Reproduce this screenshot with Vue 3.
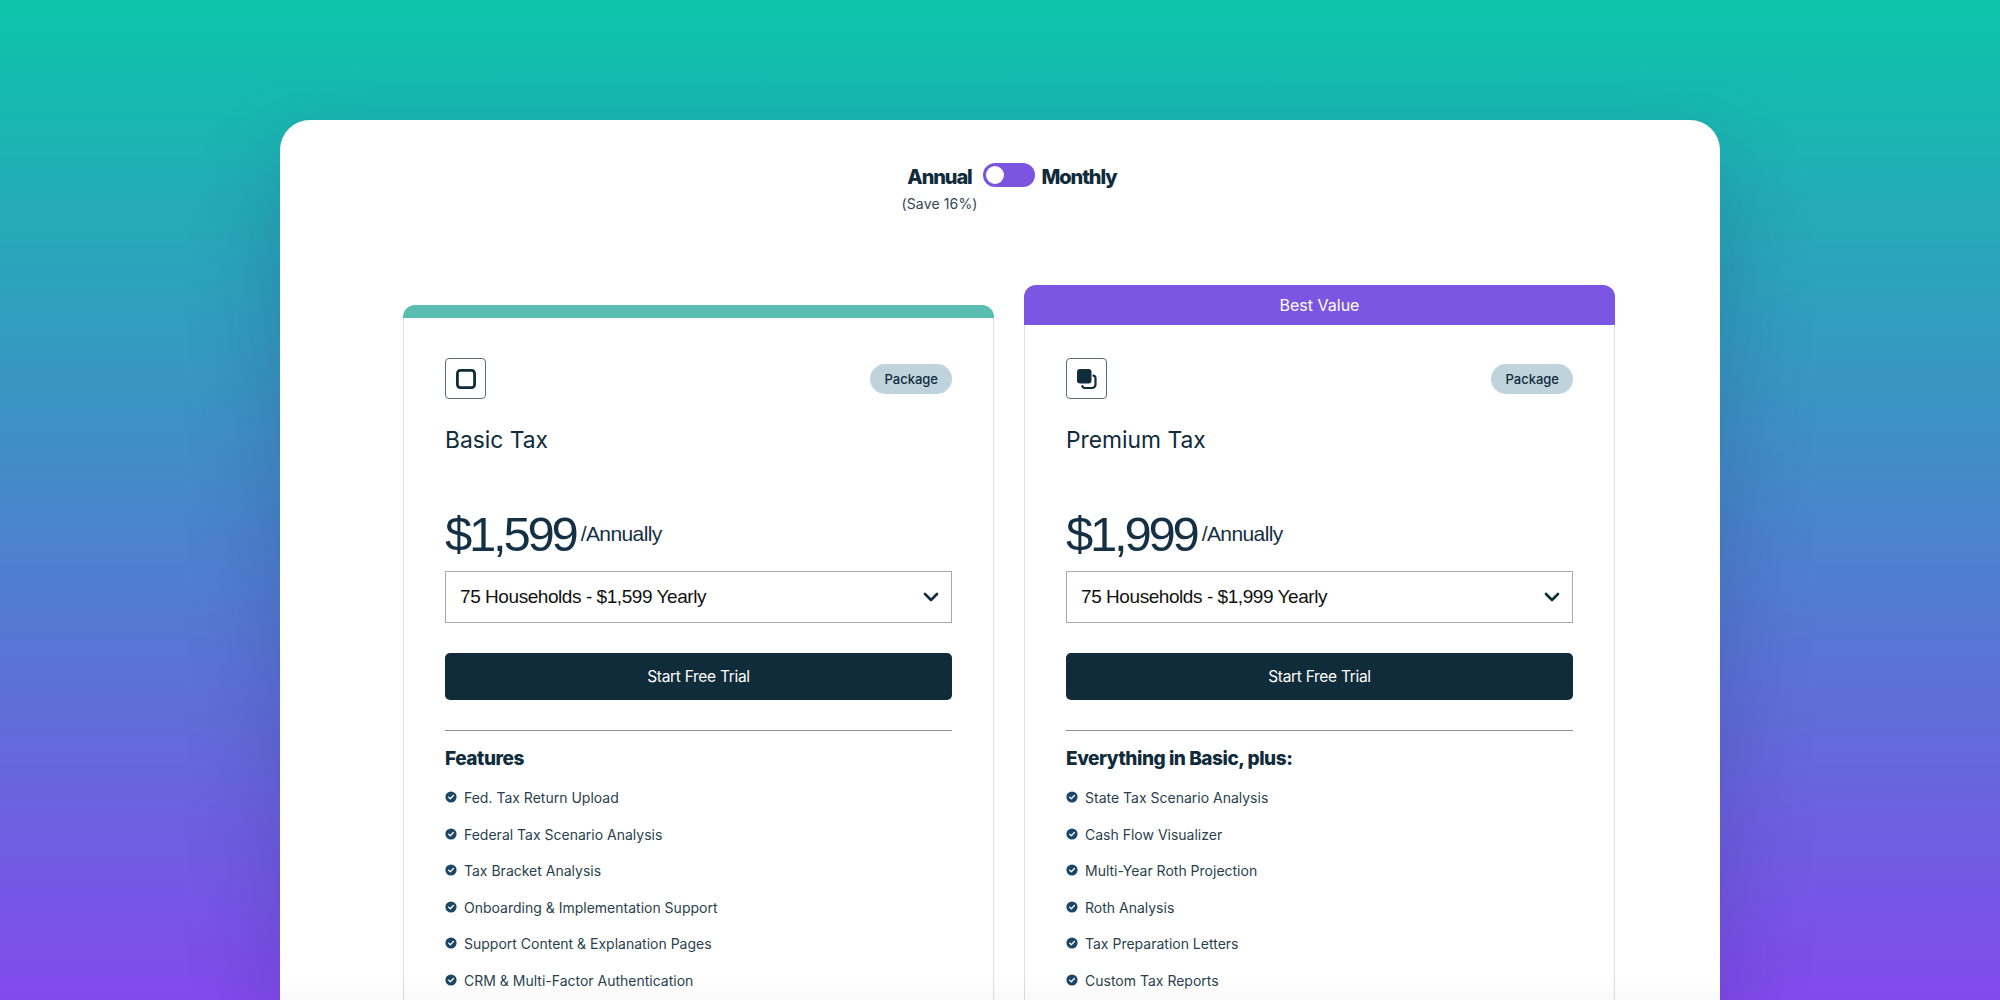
<script setup>
const plans = [
  {
    name: 'Basic Tax',
    price: '$1,599',
    heading: 'Features',
    featured: false,
    features: [
      'Fed. Tax Return Upload',
      'Federal Tax Scenario Analysis',
      'Tax Bracket Analysis',
      'Onboarding & Implementation Support',
      'Support Content & Explanation Pages',
      'CRM & Multi-Factor Authentication'
    ]
  },
  {
    name: 'Premium Tax',
    price: '$1,999',
    heading: 'Everything in Basic, plus:',
    featured: true,
    features: [
      'State Tax Scenario Analysis',
      'Cash Flow Visualizer',
      'Multi-Year Roth Projection',
      'Roth Analysis',
      'Tax Preparation Letters',
      'Custom Tax Reports'
    ]
  }
]
</script>

<template>
  <div class="page">
    <div class="panel">
      <div class="billing">
        <div class="billing-col">
          <span class="billing-label">Annual</span>
          <span class="save">(Save 16%)</span>
        </div>
        <div class="toggle"><span class="knob"></span></div>
        <span class="billing-label">Monthly</span>
      </div>

      <div class="cards">
        <div v-for="plan in plans" :key="plan.name" class="card" :class="{ featured: plan.featured }">
          <div class="card-bar">{{ plan.featured ? 'Best Value' : '' }}</div>
          <div class="card-body">
            <div class="card-top">
              <div class="icon-box">
                <svg v-if="!plan.featured" width="22" height="22" viewBox="0 0 22 22" fill="none">
                  <rect x="2.4" y="2.4" width="17.2" height="17.2" rx="3" stroke="#102b3a" stroke-width="2.8" />
                </svg>
                <svg v-else width="22" height="22" viewBox="0 0 22 22" fill="none">
                  <path d="M8.5 20h7.5a3.5 3.5 0 0 0 3.5-3.5V10a2.5 2.5 0 0 0-2-2.4" stroke="#102b3a" stroke-width="2.2" stroke-linecap="round" />
                  <path d="M8.5 20a2.6 2.6 0 0 1-2.2-2" stroke="#102b3a" stroke-width="2.2" stroke-linecap="round" />
                  <rect x="1" y="1" width="14.5" height="14.5" rx="3" fill="#102b3a" />
                </svg>
              </div>
              <span class="pill">Package</span>
            </div>

            <h2 class="plan-name">{{ plan.name }}</h2>

            <div class="price-row">
              <span class="price">{{ plan.price }}</span>
              <span class="period">/Annually</span>
            </div>

            <div class="select">
              <span>75 Households - {{ plan.price }} Yearly</span>
              <svg width="16" height="10" viewBox="0 0 16 10" fill="none">
                <path d="M2 2l6 6 6-6" stroke="#102b3a" stroke-width="2.6" stroke-linecap="round" stroke-linejoin="round" />
              </svg>
            </div>

            <button class="cta">Start Free Trial</button>

            <div class="divider"></div>

            <h3 class="features-title">{{ plan.heading }}</h3>
            <ul class="features">
              <li v-for="item in plan.features" :key="item">
                <svg class="check" width="12" height="12" viewBox="0 0 12 12">
                  <circle cx="6" cy="6" r="5.6" fill="#1c4668" />
                  <path d="M3.6 6.1l1.7 1.6 3.1-3.2" fill="none" stroke="#fff" stroke-width="1.3" stroke-linecap="round" stroke-linejoin="round" />
                </svg>
                <span>{{ item }}</span>
              </li>
            </ul>
          </div>
        </div>
      </div>
    </div>
  </div>
</template>

<style>
html, body {
  margin: 0;
  height: 100%;
  overflow: hidden;
}
</style>

<style scoped>
.page {
  height: 1000px;
  box-sizing: border-box;
  padding-top: 120px;
  overflow: hidden;
  display: flex;
  justify-content: center;
  background: linear-gradient(180deg, #0bc5a9 0%, #824aec 100%);
  font-family: Inter, "Liberation Sans", sans-serif;
  color: #102b3a;
}

.panel {
  position: relative;
  width: 1440px;
  height: 880px;
  box-sizing: border-box;
  padding: 43px 105px 0 123px;
  background: #fff;
  border-radius: 30px 30px 0 0;
  box-shadow: 0 40px 90px rgba(25, 30, 90, 0.22);
  overflow: hidden;
}

.panel::after {
  content: '';
  position: absolute;
  left: 0;
  right: 0;
  bottom: 0;
  height: 22px;
  background: linear-gradient(180deg, rgba(0, 0, 0, 0), rgba(0, 0, 0, 0.025));
}

.billing {
  display: flex;
  align-items: flex-start;
  justify-content: center;
  padding-left: 1px;
  height: 122px;
}

.billing-col {
  display: flex;
  flex-direction: column;
  align-items: center;
  width: 74px;
}

.billing-label {
  font-size: 20px;
  line-height: 28px;
  font-weight: 800;
  letter-spacing: -1.1px;
}

.save {
  margin-top: 4px;
  font-size: 14px;
  line-height: 18px;
  letter-spacing: 0.15px;
  color: #33475a;
  white-space: nowrap;
}

.toggle {
  width: 52px;
  height: 24px;
  margin: 0 7px 0 6px;
  box-sizing: border-box;
  padding: 3px;
  border-radius: 12px;
  background: #7b55e0;
}

.knob {
  display: block;
  width: 18px;
  height: 18px;
  border-radius: 50%;
  background: #fff;
}

.cards {
  display: flex;
  align-items: flex-start;
  gap: 30px;
}

.card {
  width: 591px;
  margin-top: 20px;
  flex: none;
  box-sizing: border-box;
}

.card.featured {
  margin-top: 0;
}

.card-bar {
  height: 13px;
  border-radius: 12px 12px 0 0;
  background: #59bdb1;
  text-align: center;
  font-size: 16px;
  line-height: 40px;
  color: #fff;
}

.featured .card-bar {
  height: 40px;
  background: #7a56e2;
}

.card-body {
  box-sizing: border-box;
  height: 800px;
  padding: 40px 41px 0;
  border: 1px solid #d8dee2;
  border-top: 0;
}

.featured .card-body {
  padding-top: 33px;
}

.card-top {
  display: flex;
  align-items: center;
  justify-content: space-between;
}

.icon-box {
  width: 41px;
  height: 41px;
  box-sizing: border-box;
  display: flex;
  align-items: center;
  justify-content: center;
  border: 1px solid #5f6b74;
  border-radius: 4px;
}

.pill {
  display: flex;
  align-items: center;
  height: 30px;
  padding: 0 14px;
  border-radius: 15px;
  background: #bfd3dd;
  font-size: 13px;
  font-weight: 500;
}

.plan-name {
  margin: 25px 0 0;
  font-size: 22.8px;
  line-height: 32px;
  font-weight: 400;
}

.price-row {
  display: flex;
  align-items: center;
  gap: 5px;
  margin-top: 48px;
  height: 60px;
}

.price {
  font-family: "Liberation Sans", Arial, sans-serif;
  font-size: 49px;
  letter-spacing: -3.2px;
  color: #143044;
}

.period {
  font-family: "Liberation Sans", Arial, sans-serif;
  font-size: 21px;
  letter-spacing: -0.6px;
  color: #143044;
}

.select {
  display: flex;
  align-items: center;
  justify-content: space-between;
  box-sizing: border-box;
  height: 52px;
  margin-top: 7px;
  padding: 0 12px 0 14px;
  border: 1px solid #a9a9a9;
  font-family: "Liberation Sans", Arial, sans-serif;
  font-size: 19px;
  letter-spacing: -0.44px;
  color: #111;
}

.cta {
  display: block;
  width: 100%;
  height: 47px;
  margin-top: 30px;
  padding: 0;
  border: 0;
  border-radius: 5px;
  background: #102b3a;
  color: #fff;
  font-family: inherit;
  font-size: 15.5px;
  letter-spacing: -0.3px;
}

.divider {
  height: 1px;
  margin-top: 30px;
  background: #8b8f92;
}

.features-title {
  margin: 15px 0 0;
  font-size: 19px;
  line-height: 26px;
  font-weight: 800;
  letter-spacing: -0.45px;
}

.features {
  list-style: none;
  margin: 15px 0 0;
  padding: 0;
  display: flex;
  flex-direction: column;
  gap: 15.5px;
}

.features li {
  display: flex;
  align-items: flex-start;
  gap: 7px;
  font-size: 14px;
  line-height: 21px;
  color: #2a3f4e;
}

.check {
  flex: none;
  margin-top: 4px;
}
</style>
